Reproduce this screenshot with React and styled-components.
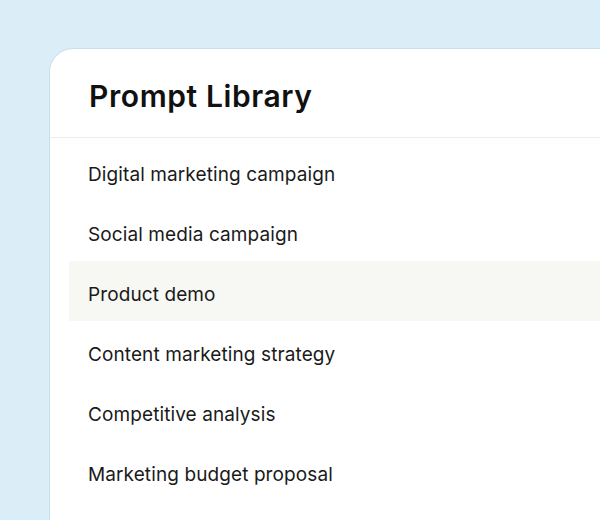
import React from 'react'
import styled, { createGlobalStyle } from 'styled-components'

const prompts = [
  'Digital marketing campaign',
  'Social media campaign',
  'Product demo',
  'Content marketing strategy',
  'Competitive analysis',
  'Marketing budget proposal',
]

const App = () => {
  return (
    <Spage>
      <GlobalStyle />
      <Scard>
        <Sheader>
          <Stitle>Prompt Library</Stitle>
        </Sheader>
        <Slist>
          {prompts.map(name => (
            <Sitem key={name} active={name === 'Product demo'}>
              {name}
            </Sitem>
          ))}
        </Slist>
      </Scard>
    </Spage>
  )
}

const GlobalStyle = createGlobalStyle`
  html, body {
    margin: 0;
    height: 100%;
    background: #dbedf6;
    overflow: hidden;
  }
  body {
    font-family: Inter, 'Noto Sans', sans-serif;
    color: #151515;
  }
`
const Spage = styled.div`
  height: 520px;
  padding: 48px 0 0 49px;
  box-sizing: border-box;
`
const Scard = styled.div`
  background: #ffffff;
  border: 1px solid #c7e0ed;
  border-right: none;
  border-bottom: none;
  border-radius: 24px 0 0 0;
  height: 472px;
  box-sizing: border-box;
`
const Sheader = styled.div`
  display: flex;
  align-items: center;
  height: 89px;
  padding: 5px 0 0 39px;
  box-sizing: border-box;
  border-bottom: 1px solid #ececec;
`
const Stitle = styled.h1`
  margin: 0;
  font-size: 30px;
  font-weight: 600;
  letter-spacing: 0.6px;
  color: #111111;
`
const Slist = styled.ul`
  list-style: none;
  margin: 0;
  padding: 3px 0 0 19px;
`
const Sitem = styled.li`
  display: flex;
  align-items: center;
  height: 60px;
  padding: 6px 0 0 19px;
  box-sizing: border-box;
  font-size: 19px;
  letter-spacing: 0.1px;
  color: #1a1a1a;
  background: ${props => props.active ? '#f7f7f3' : 'transparent'};
`

export default App
